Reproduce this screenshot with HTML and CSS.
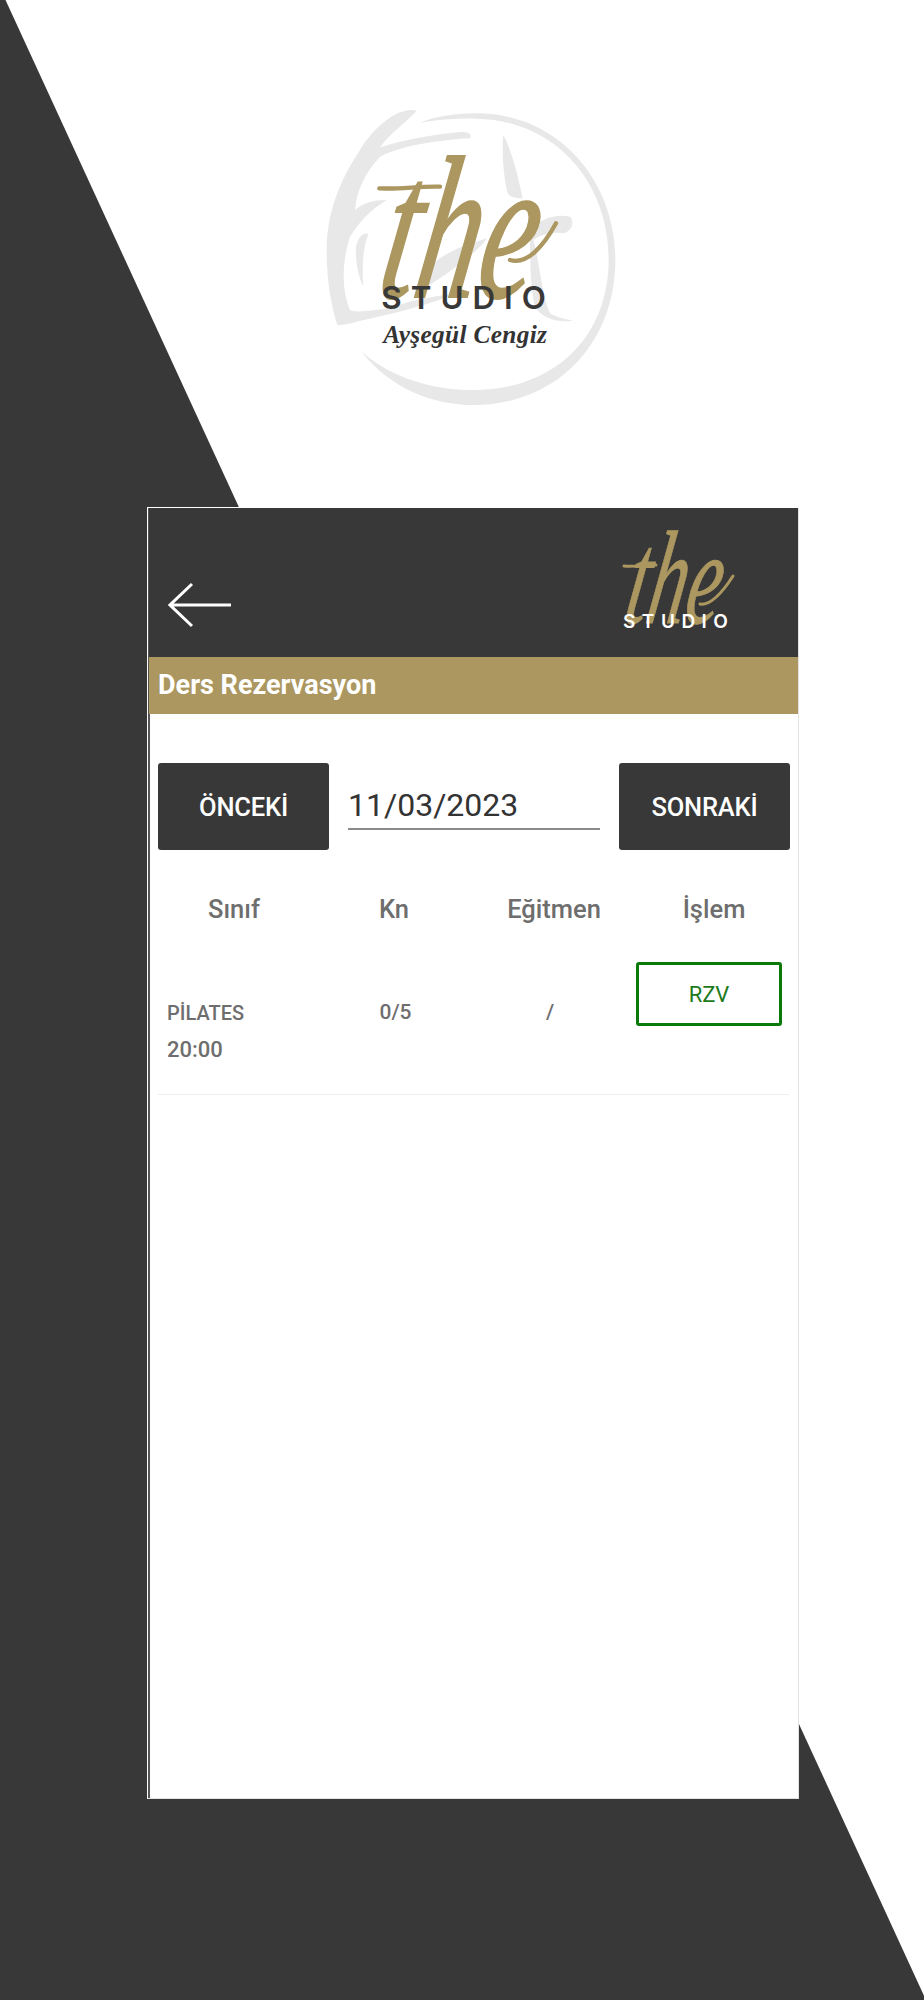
FILE: index.html
```html
<!DOCTYPE html>
<html lang="tr">
<head>
<meta charset="utf-8">
<title>Ders Rezervasyon</title>
<link rel="stylesheet" href="styles.css">
</head>
<body>
<div class="backdrop"></div>
<main class="page">
  <svg class="brand" viewBox="0 0 1020 1020" aria-label="the Studio">
    <g class="brush">
      <path d="M185 785C270 895 400 945 520 945C770 945 948 760 946 505C944 265 770 70 530 70C470 70 410 78 360 98C420 88 480 84 530 86C760 90 925 270 926 505C927 745 760 900 520 900C390 900 270 860 185 785Z"/>
      <path d="M350 62C300 50 230 100 180 180C120 270 80 370 80 480C80 580 95 650 112 705C150 705 230 680 300 650C220 660 170 670 150 660C120 590 130 500 150 440C175 400 210 360 260 330C215 330 190 340 165 360C170 300 195 250 240 200C310 165 420 150 510 145C520 130 500 122 460 128C390 135 310 150 240 172C270 130 320 95 350 62Z"/>
      <path d="M168 470C175 440 190 425 205 432C190 470 185 520 190 590C175 560 165 510 168 470Z"/>
      <path d="M610 135C630 170 650 240 668 325C640 325 625 320 620 300C610 250 605 180 610 135Z"/>
      <path d="M690 420C720 385 770 370 810 380C825 395 815 425 790 430C760 425 730 430 700 450C720 520 725 620 750 670C775 685 800 688 818 692C770 700 720 680 705 650C690 590 690 500 690 420Z"/>
      <path d="M360 560C420 490 480 470 560 445C540 480 460 540 380 590Z"/>
      <path d="M190 690C260 650 350 625 470 610C400 640 290 670 190 690Z"/>
    </g>
    <text class="brand-the" transform="translate(225 620) skewX(-10) scale(.62 1)">the</text>
    <path class="brand-swash" d="M238 295C300 298 360 288 420 290"/>
    <path class="brand-swash" d="M630 510C680 525 730 470 768 400"/>
    <text class="brand-studio" x="244" y="656">STUDIO</text>
    <text class="brand-name" x="250" y="760">Ayşegül Cengiz</text>
  </svg>

  <section class="phone">
    <header class="topbar">
      <svg class="back" viewBox="0 0 64 46" aria-hidden="true">
        <path d="M24 2L2 23L24 44M2 23H63"/>
      </svg>
      <svg class="mini-logo" viewBox="0 -10 122 112" aria-label="the Studio">
        <text class="mini-the" transform="translate(2 93) skewX(-10) scale(.58 1)">the</text>
        <path class="mini-swash" d="M80 74C92 76 104 60 113 46"/>
        <path class="mini-swash" d="M4 36C14 37 26 35 36 35"/>
        <text class="mini-studio" x="3" y="98">STUDIO</text>
      </svg>
    </header>
    <h1 class="title">Ders Rezervasyon</h1>

    <div class="date-nav">
      <button class="nav-btn" type="button">ÖNCEKİ</button>
      <div class="date-field">11/03/2023</div>
      <button class="nav-btn" type="button">SONRAKİ</button>
    </div>

    <div class="grid heads">
      <div>Sınıf</div>
      <div>Kn</div>
      <div>Eğitmen</div>
      <div>İşlem</div>
    </div>

    <div class="grid row">
      <div class="class-cell">
        <span class="class-name">PİLATES</span>
        <span class="class-time">20:00</span>
      </div>
      <div class="cell">0/5</div>
      <div class="cell">/</div>
      <button class="rzv" type="button">RZV</button>
    </div>
  </section>
</main>
</body>
</html>
```
FILE: styles.css
```css
* { box-sizing: border-box; }
html, body { margin: 0; padding: 0; background: #fff; }
body { position: relative; height: 2000px; overflow: hidden; font-family: Roboto, "Liberation Sans", sans-serif; }

.backdrop {
  position: absolute;
  inset: 0;
  background: #383838;
  clip-path: polygon(0 0, 5.5px 0, 926px 2000px, 0 2000px);
}

.page { position: relative; padding-top: 90px; }

.brand { display: block; width: 340px; height: 340px; margin-left: 300px; }
.brush path { fill: #e8e8e8; }
.brand-the { font: italic 400 610px "Liberation Serif", serif; fill: #ab975f; stroke: #ab975f; stroke-width: 6px; }
.brand-swash { fill: none; stroke: #ab975f; stroke-width: 13px; stroke-linecap: round; }
.brand-studio { font: 600 94px Inter, sans-serif; letter-spacing: 27px; fill: #383838; }
.brand-name { font: italic 700 76px "Liberation Serif", serif; letter-spacing: 1px; fill: #333; }

.phone {
  width: 652px;
  height: 1292px;
  margin: 77px 0 0 147px;
  background: #fff;
  border-style: solid;
  border-color: #fff #e2e2e2 #e2e2e2 #fff;
  border-width: 1px;
  box-shadow: inset 2px 0 0 #555;
}

.topbar {
  height: 149px;
  margin-left: 1px;
  padding: 0 56px 25px 19px;
  background: #383838;
  display: flex;
  justify-content: space-between;
  align-items: flex-end;
}
.back { width: 64px; height: 46px; margin-bottom: 4px; fill: none; stroke: #fff; stroke-width: 3px; }
.mini-logo { width: 122px; height: 112px; overflow: visible; }
.mini-the { font: italic 400 133px "Liberation Serif", serif; fill: #ab975f; stroke: #ab975f; stroke-width: 1px; }
.mini-swash { fill: none; stroke: #ab975f; stroke-width: 3px; stroke-linecap: round; }
.mini-studio { font: 600 19px Inter, sans-serif; letter-spacing: 6.5px; fill: #fff; }

.title {
  height: 57px;
  margin: 0 0 0 1px;
  padding-left: 9px;
  background: #ab975f;
  color: #fff;
  font-size: 27px;
  font-weight: 700;
  line-height: 57px;
}

.date-nav {
  display: grid;
  grid-template-columns: 171px 1fr 171px;
  column-gap: 19px;
  width: 632px;
  margin: 49px 0 0 10px;
}
.nav-btn {
  height: 87px;
  border: 0;
  border-radius: 3px;
  background: #383838;
  color: #fff;
  font: 500 25.5px Roboto, sans-serif;
  letter-spacing: -.2px;
}
.date-field {
  height: 67px;
  padding-bottom: 3px;
  display: flex;
  align-items: flex-end;
  border-bottom: 2px solid #8a8a8a;
  color: #333;
  font-size: 32px;
  line-height: 40px;
}

.grid {
  display: grid;
  grid-template-columns: repeat(4, 160px);
  width: 640px;
  margin-left: 6px;
}
.heads {
  margin-top: 45px;
  color: #6e6e6e;
  font-size: 25.5px;
  font-weight: 500;
  line-height: 28px;
  text-align: center;
}
.row {
  margin-top: 39px;
  height: 133px;
  width: 631px;
  margin-left: 10px;
  grid-template-columns: 157px 161px 148px 1fr;
  border-bottom: 1px solid #eeeeee;
  color: #6e6e6e;
}
.class-cell { display: flex; flex-direction: column; padding: 38px 0 0 9px; font-weight: 500; }
.class-name { font-size: 20px; line-height: 26px; }
.class-time { margin-top: 11px; font-size: 22px; line-height: 26px; }
.cell { padding-top: 37px; font-size: 21px; font-weight: 500; line-height: 26px; text-align: center; }
.rzv {
  width: 146px;
  height: 64px;
  justify-self: end;
  margin-right: 7px;
  border: 3px solid #0a7a0a;
  border-radius: 3px;
  background: #fff;
  color: #1c7a1c;
  font: 400 22px Roboto, sans-serif;
}
```
